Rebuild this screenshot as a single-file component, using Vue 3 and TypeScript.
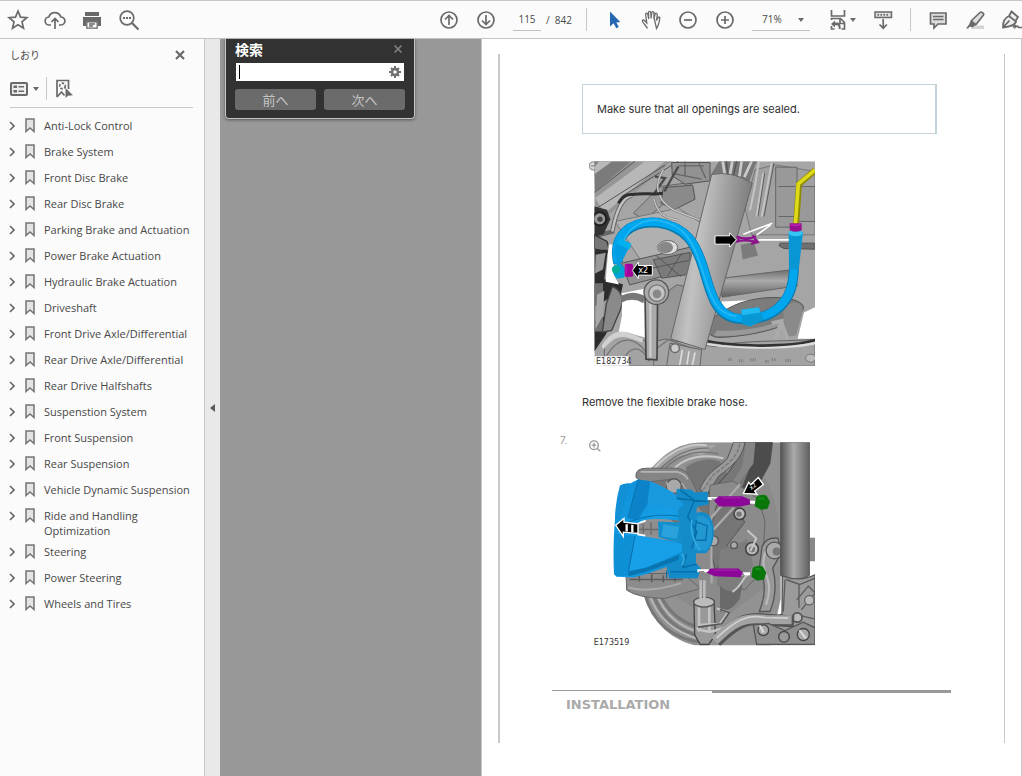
<script setup lang="ts">
import { ref } from 'vue'

interface Bookmark {
  title: string
}

const bookmarks: Bookmark[] = [
  'Anti-Lock Control',
  'Brake System',
  'Front Disc Brake',
  'Rear Disc Brake',
  'Parking Brake and Actuation',
  'Power Brake Actuation',
  'Hydraulic Brake Actuation',
  'Driveshaft',
  'Front Drive Axle/Differential',
  'Rear Drive Axle/Differential',
  'Rear Drive Halfshafts',
  'Suspenstion System',
  'Front Suspension',
  'Rear Suspension',
  'Vehicle Dynamic Suspension',
  'Ride and Handling Optimization',
  'Steering',
  'Power Steering',
  'Wheels and Tires',
].map((title) => ({ title }))

const page = ref('115')
const zoom = ref('71%')
const query = ref('')
</script>

<template>
  <div class="app">
    <header class="toolbar">
      <div class="group">
        <button class="tool" aria-label="Star">
          <svg viewBox="0 0 24 24"><path d="M12 3.200l2.500 6 6.400.5-4.900 4.200 1.500 6.300-5.500-3.400-5.500 3.400L8 13.900 3.100 9.700l6.400-.5z" class="line" /></svg>
        </button>
        <button class="tool" aria-label="Upload">
          <svg viewBox="0 0 24 24"><path d="M8 17H6.500a4 4 0 0 1-.7-8A6.300 6.300 0 0 1 17.800 9a4 4 0 0 1 .2 8H16M12 21v-10M8.500 14l3.500-3.500 3.500 3.500" class="line" /></svg>
        </button>
        <button class="tool" aria-label="Print">
          <svg viewBox="0 0 24 24"><path d="M5 4h14v4H5zM3 9h18v9h-3v-4H6v4H3z" class="solid" /><path d="M6.800 13.800h10.400v6.400H6.800z" fill="#fbfbfb" stroke="#6a6a6a" stroke-width="1.300" /><path d="M9 16h6M9 18h4" class="line thin" /></svg>
        </button>
        <button class="tool" aria-label="Search">
          <svg viewBox="0 0 24 24"><circle cx="10" cy="10" r="6.800" class="line" /><path d="M15 15l6.500 6.500" class="line heavy" /><path d="M6 9h2v2H6zM9 9h2v2H9zM12 9h2v2h-2z" class="solid" /></svg>
        </button>
      </div>

      <div class="group main-tools">
        <button class="tool" aria-label="Previous page">
          <svg viewBox="0 0 24 24"><circle cx="12" cy="12" r="8" class="line" /><path d="M12 17V8M8 11.500l4-4 4 4" class="line" /></svg>
        </button>
        <button class="tool" aria-label="Next page">
          <svg viewBox="0 0 24 24"><circle cx="12" cy="12" r="8" class="line" /><path d="M12 7v9M8 12.500l4 4 4-4" class="line" /></svg>
        </button>
        <label class="pager"><input v-model="page" aria-label="Page" /><span>/&nbsp; 842</span></label>
        <i class="divider"></i>
        <button class="tool" aria-label="Select">
          <svg viewBox="0 0 24 24"><path d="M8 3.500v15l3.600-3.200 2.600 5 2.600-1.300-2.500-4.600 4-.4z" fill="#2468b0" /></svg>
        </button>
        <button class="tool" aria-label="Pan">
          <svg viewBox="0 0 24 24"><path d="M8.500 20.500c-1-2-3.500-4.500-5-7-.6-1.200 1-2.100 2-1l2.300 2.300L6.600 6.500c-.2-1.500 1.900-1.900 2.200-.3l1 5M9.700 10L9.500 4.500c0-1.600 2.100-1.600 2.300 0l.4 6M12.200 9.500l.6-5c.2-1.400 2.100-1.200 2.200.2l-.1 6M15.100 10l1-4c.5-1.300 2.200-.8 2.200.5l-.8 6 1.600-3c.7-1 2-.3 1.700 1-.6 4-1.500 7.500-3.300 10z" class="line thin" /></svg>
        </button>
        <button class="tool" aria-label="Zoom out">
          <svg viewBox="0 0 24 24"><circle cx="12" cy="12" r="8" class="line" /><path d="M8 12h8" class="line" /></svg>
        </button>
        <button class="tool" aria-label="Zoom in">
          <svg viewBox="0 0 24 24"><circle cx="12" cy="12" r="8" class="line" /><path d="M8 12h8M12 8v8" class="line" /></svg>
        </button>
        <div class="zoom-box">
          <select v-model="zoom" aria-label="Zoom"><option>71%</option><option>100%</option></select>
          <svg class="caret" viewBox="0 0 6 4"><path d="M0 0h6L3 4z" class="solid" /></svg>
        </div>
        <button class="tool fit" aria-label="Page display">
          <svg viewBox="0 0 24 24"><path d="M5.500 2v6h13V2M5.500 12v-1.500h9l4 4V21h-3M5.500 18v3h3M14 11v4.500h4" class="line" /><path d="M9 12.500l-4 3.500 4 3.500v-2.200h2c1.300.2 1.700 1.200 1.700 3.700h2c0-4.500-1-6.500-3.700-6.500H9z" class="solid" /></svg>
          <svg class="caret" viewBox="0 0 6 4"><path d="M0 0h6L3 4z" class="solid" /></svg>
        </button>
        <button class="tool" aria-label="Read mode">
          <svg viewBox="0 0 24 24"><path d="M4 4h16.500v5.500H4z" fill="#ddd" stroke="#6a6a6a" stroke-width="1.500" /><path d="M6.500 6.800h12" stroke-dasharray="1.500 1.500" class="line" /><path d="M12.200 11v9M8.500 16.500l3.700 3.700 3.700-3.700" class="line" /></svg>
        </button>
        <i class="divider"></i>
        <button class="tool" aria-label="Comment">
          <svg viewBox="0 0 24 24"><path d="M4.500 5h15.500v11h-8l-4 4v-4H4.500z" fill="#ddd" stroke="#6a6a6a" stroke-width="1.700" /><path d="M7 8.500h10.500M7 11.500h10.500" class="line thin" /></svg>
        </button>
        <button class="tool" aria-label="Highlight">
          <svg viewBox="0 0 24 24"><path d="M10 17.500h11V21H8z" fill="#d4d4d4" /><path d="M8.500 12.500L17 4.500c1-1 4.500.5 3.500 2.500L13 16.500l-3.500 1z" fill="#ddd" stroke="#6a6a6a" stroke-width="1.600" /><path d="M8 12l5.500 4-4 3.500-2.500-1L5 20.500H3l3-4z" class="solid" /></svg>
        </button>
        <button class="tool sign" aria-label="Sign">
          <svg viewBox="0 0 24 24"><path d="M2 19.500c0-6 1-9 6-11.500l7 5.500c-1 4-6 5-13 6zM8 8l2.500-4.500L17 9l-2.500 4M2 19.500l6.500-7" fill="#eee" stroke="#6a6a6a" stroke-width="1.800" /><path d="M12 19.500c1.500-2 3-3 2.500-.5 1.500-1.500 2.500-1 3 .5h5" class="line" /></svg>
        </button>
      </div>
    </header>

    <div class="body">
      <aside class="sidebar">
        <div class="side-head">
          <h2>しおり</h2>
          <button class="close" aria-label="閉じる"><svg viewBox="0 0 10 10"><path d="M1 1l8 8M9 1L1 9" class="line heavy" /></svg></button>
        </div>
        <div class="side-tools">
          <button class="options" aria-label="Options">
            <svg class="list-icon" viewBox="0 0 18 14"><rect x="1" y="1" width="16" height="12" rx="1" fill="#eee" stroke="#6a6a6a" stroke-width="2" /><path d="M3.500 3.500h3.500v2.500H3.500zM3.500 8h3.500v2.500H3.500zM8.500 4h5.500v1.500H8.500zM8.500 8.500h5.500V10H8.500z" class="solid" /></svg>
            <svg class="caret" viewBox="0 0 6 4"><path d="M0 0h6L3 4z" class="solid" /></svg>
          </button>
          <i class="divider"></i>
          <button class="find-mark" aria-label="Find bookmark">
            <svg viewBox="0 0 18 20"><path d="M2 18V1.500h11.500V10M2 18l4.500-5 3 3.500" class="line" /><circle cx="7.500" cy="7" r="2.800" stroke-dasharray="2.500 1.500" class="line" /><path d="M10.500 9v10l2.500-2.200 5-.5z" class="solid" /></svg>
          </button>
        </div>
        <ul class="bookmarks">
          <li v-for="item in bookmarks" :key="item.title">
            <button class="expand" :aria-label="'Expand ' + item.title"><svg viewBox="0 0 6 10"><path d="M1 1l4 4-4 4" class="line" /></svg></button>
            <svg class="mark" viewBox="0 0 10 15"><path d="M1 1h8v12.500L5 10l-4 3.500z" fill="#e4e4e4" stroke="#747474" stroke-width="1.500" /></svg>
            <a href="#">{{ item.title }}</a>
          </li>
        </ul>
      </aside>
      <button class="splitter" aria-label="Collapse panel"><svg viewBox="0 0 5 8"><path d="M5 0v8L0 4z" fill="#5c5c5c" /></svg></button>

      <main class="viewer">
        <section class="search">
          <div class="search-head">
            <h2>検索</h2>
            <button aria-label="閉じる"><svg viewBox="0 0 10 10"><path d="M1.500 1.500l7 7M8.500 1.500l-7 7" stroke="#858585" stroke-width="1.500" /></svg></button>
          </div>
          <div class="field">
            <i class="cursor"></i>
            <input v-model="query" aria-label="検索" />
            <button aria-label="設定"><svg viewBox="0 0 12 12"><circle cx="6" cy="6" r="3" fill="none" stroke="#707070" stroke-width="2.500" /><path d="M6 0v3M6 9v3M0 6h3M9 6h3M2 2l2 2M8 8l2 2M10 2L8 4M4 8l-2 2" stroke="#707070" stroke-width="2" /></svg></button>
          </div>
          <div class="search-buttons"><button>前へ</button><button>次へ</button></div>
        </section>

        <article class="page">
          <div class="frame">
            <p class="note">Make sure that all openings are sealed.</p>

            <svg class="figure first" viewBox="42 34 678 614" role="img" aria-label="Flexible brake hose">
              <defs>
                <linearGradient id="strut" x1="0" y1="0" x2="1" y2=".25"><stop offset="0" stop-color="#858585" /><stop offset=".4" stop-color="#c2c2c2" /><stop offset="1" stop-color="#777" /></linearGradient>
                <linearGradient id="shaft" x1="0" y1="0" x2="0" y2="1"><stop offset="0" stop-color="#6d6d6d" /><stop offset=".4" stop-color="#aaa" /><stop offset="1" stop-color="#606060" /></linearGradient>
                <clipPath id="hose-clip"><path d="M58 34h662v614H58z" /></clipPath>
              </defs>
              <circle cx="55" cy="48" r="12" fill="#ddd" stroke="#999" stroke-width="4" /><path d="M48 48h14" stroke="#888" stroke-width="4" />
              <g clip-path="url(#hose-clip)">
                <path d="M58 34h662v614H58z" fill="#a5a5a5" />
                <path d="M58 60L170 34H290L60 230z" fill="#959595" />
                <path d="M60 145L210 34h60L90 190z" fill="#b7b7b7" />
                <path d="M58 128L180 34M58 180L270 46M140 140L310 34" stroke="#555" stroke-width="3" fill="none" />
                <path d="M58 34h110L60 125z" fill="#7b7b7b" /><path d="M72 34h40L60 72V50z" fill="#b9b9b9" />
                <path d="M175 190l80-80 90-12 14 50-70 30-20-18-60 50z" fill="#999" stroke="#666" stroke-width="3" />
                <path d="M265 113l88-7 7 42-62 32-40-20z" fill="#8a8a8a" stroke="#555" stroke-width="3" />
                <path d="M120 215l190-40 100 65-5 85-200 18z" fill="#b0b0b0" stroke="#777" stroke-width="3" />
                <path d="M290 38h115v55l-75 10-38-25z" fill="#929292" stroke="#555" stroke-width="3" />
                <path d="M310 48h76M330 34v42M300 72l80 16M372 40l20 45" stroke="#666" stroke-width="4" />
                <path d="M540 60l60-15 120 20v190H530l-20-80z" fill="#a0a0a0" stroke="#777" stroke-width="3" />
                <path d="M602 52h64v180h-64zM670 110h50v105h-50zM610 110h50M610 200h50" fill="#999" stroke="#666" stroke-width="3" />
                <path d="M540 34l-22 50-10 85M552 34l-12 75-15 73M565 70l-20 130M590 40l-30 160" stroke="#c4c4c4" stroke-width="6" fill="none" />
                <path d="M544 34l-22 50-10 85M569 70l-20 130M597 40l-30 160" stroke="#5c5c5c" stroke-width="3" fill="none" />
                <path d="M240 80l30 5-35 50M310 50l-42 75" stroke="#4a4a4a" stroke-width="7" fill="none" />
                <path d="M265 60c-20 30-35 80 30 120l90 35M236 147c18 60 42 55 75 65" stroke="#777" stroke-width="7" fill="none" />
                <path d="M265 60c-20 30-35 80 30 120l90 35M236 147c18 60 42 55 75 65" stroke="#c9c9c9" stroke-width="4" fill="none" />
                <path d="M58 260l54-15c12-65 30-104 60-108" fill="none" stroke="#666" stroke-width="13" /><path d="M112 245c12-65 30-104 60-108" fill="none" stroke="#c4c4c4" stroke-width="7" /><path d="M130 160q15-28 42-26c40-6 60 2 91-4" fill="none" stroke="#303030" stroke-width="9" />
                <path d="M58 170l38 10 10 28-20 45-28 8z" fill="#333" /><circle cx="74" cy="207" r="20" fill="#999" stroke="#222" stroke-width="7" /><circle cx="75" cy="208" r="8" fill="#444" />
                <path d="M58 255l38 20 10 34-48-12z" fill="#777" stroke="#333" stroke-width="4" />
                <path d="M58 300h40l-10 88 56 15-20 92-32 60-34 50z" fill="#2c2c2c" /><path d="M101 284h16v92l15 28-40-8z" fill="#fff" /><path d="M58 400h26v145H58z" fill="#707070" /><path d="M62 315l30-6-8 50-24 12zM60 470l45-26-5 50-42 20z" fill="#9a9a9a" />
                <path d="M112 410c28 10 36 40 24 70l-26 62-28 5 12-85z" fill="#8a8a8a" stroke="#444" stroke-width="4" />
                <path d="M66 435l22-12-4 75-23 40z" fill="#a8a8a8" />
                <path d="M140 340l248-58 20 60-244 63z" fill="#929292" stroke="#555" stroke-width="3" /><path d="M235 330l110-22v65l-85 12zM160 370l180-38M245 318l72 62M320 310l-42 68" fill="#7b7b7b" stroke="#555" stroke-width="3" />
                <path d="M140 430l75-15 20 155-58-16-48 3 12-60z" fill="#fff" /><path d="M140 437q38-18 70 3l-5 20q-34-20-68 0z" fill="#777" />
                <ellipse cx="278" cy="293" rx="30" ry="21" fill="#ddd" stroke="#666" stroke-width="3" /><ellipse cx="272" cy="293" rx="22" ry="17" fill="#888" />
                <path d="M245 450l60-45 62 12-25 130-94 40z" fill="#969696" stroke="#666" stroke-width="3" />
                <path d="M435 386l212-26 20 48-226 34z" fill="url(#shaft)" stroke="#666" stroke-width="3" />
                <path d="M615 280h105v18l-93-2-15-8z" fill="#707070" stroke="#555" stroke-width="3" />
                <path d="M440 455l210-10 15 40-210 60-30-25z" fill="#fff" /><path d="M442 487c80-60 238-53 244-14-8 48-130 86-258 90-42-8-49-45 14-76z" fill="#7c7c7c" stroke="#555" stroke-width="3" /><path d="M425 542c90 5 185-17 228-48l4 12c-52 34-154 57-240 52z" fill="#999" />
                <path d="M625 470c36-20 60-13 58 17l-20 70-34 5z" fill="#8a8a8a" /><path d="M687 488l33-16v95h-52z" fill="#fff" />
                <path d="M590 520l28-6-16 58M618 515l20 54" fill="none" stroke="#aaa" stroke-width="12" />
                <path d="M88 590c45-65 74-40 120-18 36 15 55-15 80 0l130 18c80-20 190-14 302-21v79H88z" fill="#a3a3a3" stroke="#666" stroke-width="3" />
                <path d="M390 568c60 15 245 25 330-1v8c-95 27-250 16-343 0z" fill="#333" /><path d="M390 578c70 16 240 20 330-2v8c-95 20-250 14-335 0z" fill="#ddd" /><path d="M80 588c40-62 72-45 124-21l-2 12c-55-22-75-31-117 20z" fill="#d0d0d0" />
                <path d="M95 617c50-80 105-42 127 8M140 640c24-58 58-55 83-5M240 600l40-30 80 28v50H235z" fill="none" stroke="#777" stroke-width="4" />
                <path d="M410 70l22-36h112l-20 60-111-10z" fill="#777" /><path d="M443 34l7 44M472 34l-8 45M500 34l-7 46M530 34l-22 48" stroke="#ccc" stroke-width="8" /><path d="M454 34l5 44M485 34l-10 45" stroke="#555" stroke-width="4" />
                <path d="M410 74q60-12 122 26L390 599l-103-32z" fill="url(#strut)" stroke="#666" stroke-width="3" />
                <path d="M285 580l95 20-5 48H275z" fill="#a4a4a4" stroke="#666" stroke-width="3" /><circle cx="300" cy="595" r="13" fill="#ccc" stroke="#666" stroke-width="4" /><path d="M322 600l-8 46M342 604l-6 40M360 608l-8 38" stroke="#ddd" stroke-width="5" />
                <path d="M210 430l38-4-2 204-33-2z" fill="#a9a9a9" stroke="#444" stroke-width="5" /><path d="M226 445v178" stroke="#ccc" stroke-width="7" />
                <circle cx="244" cy="427" r="37" fill="#aaa" stroke="#555" stroke-width="4" /><circle cx="246" cy="430" r="25" fill="#c2c2c2" stroke="#777" stroke-width="4" /><circle cx="246" cy="432" r="13" fill="#888" />
                <path d="M460 629h14M491 633h15M526 630h17M570 634h12M590 629h13M631 632h17" stroke="#808080" stroke-width="9" stroke-dasharray="4 3" /><ellipse cx="707" cy="625" rx="15" ry="12" fill="#bbb" stroke="#777" stroke-width="3" />
                <path d="M497 285l40-8 12 40-46 12z" fill="#7b7b7b" /><path d="M505 253l87-33M545 256l42-31M550 270h100" stroke="#fff" stroke-width="5" fill="none" />
                <path d="M485 260q28 12 58 0M483 276q30-10 67 2M492 264l-4 12M532 257l16 20-20 5" fill="none" stroke="#8c158c" stroke-width="7" />
                <path d="M720 61l-48 42-9 125" fill="none" stroke="#8d8b00" stroke-width="18" /><path d="M720 60l-50 42-9 126" fill="none" stroke="#dfda18" stroke-width="11" />
                <path d="M130 340C110 260 165 210 251 219c82 13 111 60 135 139 23 79 38 143 106 149 95 9 153-44 162-119 7-48 1-88 7-140" fill="none" stroke="#087bb0" stroke-width="30" />
                <path d="M129 339C109 259 165 208 251 217c82 13 111 60 135 139 23 79 38 143 106 149 95 9 153-44 162-119 7-48 1-88 7-140" fill="none" stroke="#00a7ef" stroke-width="24" />
                <path d="M144 278C165 222 215 207 252 212c79 15 101 65 121 123 34 98 40 155 111 165" fill="none" stroke="#25b9f5" stroke-width="5" />
                <path d="M118 305q3-26 14-39l36 16-27 53-15 10z" fill="#009de3" /><path d="M135 265l34 17-5 17-40-18z" fill="#00b0ef" />
                <path d="M641 246h43l-4 38-9 75h-29z" fill="#0897d4" /><ellipse cx="662" cy="250" rx="21" ry="9" fill="#36c4f5" />
                <path d="M498 480l54-8 14 38-40 20-24-7z" fill="#0898d3" /><path d="M498 480l54-8 4 16-54 8z" fill="#20b9f0" />
                <path d="M117 349l18-11 15 18-2 27-23 4-10-15z" fill="#00a0d9" /><circle cx="123" cy="359" r="12" fill="#00ad9a" />
                <rect x="149" y="342" width="25" height="39" rx="5" fill="#a3009b" /><path d="M153 346v29" stroke="#c21bb8" stroke-width="4" />
                <path d="M644 220h36v21q-18 10-36 0z" fill="#97118f" /><path d="M647 222q15 10 30 0" stroke="#c323ba" stroke-width="4" fill="none" />
                <path d="M420 258h44v-9l20 21-20 22v-9h-44zM232 347h-42v-10l-18 25 18 24v-10h42z" fill="#000" stroke="#fff" stroke-width="3" />
                <text x="190" y="371" class="part-label white">x2</text>
              </g>
              <path d="M58 619h103v29H58z" fill="#fff" /><text x="63" y="642" class="part-label">E182734</text>
            </svg>

            <p class="step">Remove the flexible brake hose.</p>

            <div class="step-row">
              <span class="number">7.</span>
              <svg class="figure second" viewBox="117 150 678 620" role="img" aria-label="Brake caliper removal">
                <defs>
                  <linearGradient id="tube"><stop offset="0" stop-color="#555" /><stop offset=".45" stop-color="#aaa" /><stop offset="1" stop-color="#636363" /></linearGradient>
                  <linearGradient id="caliper" x1="0" y1="0" x2="1" y2="1"><stop offset="0" stop-color="#0d8fd8" /><stop offset=".5" stop-color="#169fe6" /><stop offset="1" stop-color="#0a84c6" /></linearGradient>
                  <clipPath id="brake-clip"><path d="M117 156h678v610H117z" /></clipPath>
                </defs>
                <circle cx="132" cy="165" r="13" fill="none" stroke="#999" stroke-width="4" /><path d="M125 165h14M132 158v14M141 174l10 9" stroke="#999" stroke-width="4" />
                <g clip-path="url(#brake-clip)">
                  <path d="M460 156h232v470l-30 140H435C355 745 305 695 282 604L290 255C330 200 375 157 460 156z" fill="#929292" />
                  <path d="M305 232C350 183 410 160 500 164l-45 32c-64-13-114 18-145 57z" fill="#a4a4a4" />
                  <path d="M470 165C385 155 327 215 305 246M520 204c-85-18-134 13-160 44" stroke="#c8c8c8" stroke-width="6" fill="none" />
                  <path d="M478 174C394 169 339 223 319 254M505 191c-85-20-145 22-168 55" stroke="#747474" stroke-width="4" fill="none" />
                  <path d="M283 609c26 92 87 140 181 149M309 610c25 75 75 112 150 131M330 612c28 64 76 94 142 106" stroke="#777" stroke-width="9" fill="none" /><path d="M297 609c26 82 83 120 155 139M320 610c25 70 75 104 139 119" stroke="#bbb" stroke-width="5" fill="none" />
                  <path d="M408 225q55-34 100-15l85-14 62 85c40 100 48 212-5 307L500 699 350 601z" fill="#8b8b8b" /><path d="M410 230q55-34 100-15l45 78-70 105-80-90z" fill="#747474" />
                  <path d="M580 156h85l-15 75-92 86-62 75-25-77c50-53 85-77 109-159z" fill="#777" stroke="#444" stroke-width="3" />
                  <path d="M551 156h34c-8 42-28 65-78 101l-39 59-18-20c25-57 53-59 82-91z" fill="#999" stroke="#555" stroke-width="3" /><path d="M569 160c-3 42-48 70-81 96l-30 46" stroke="#777" stroke-width="4" stroke-dasharray="12 5" fill="none" />
                  <path d="M610 156h59l-8 65-45 82-40-12 30-76z" fill="#4c4c4c" /><path d="M588 156h28l-6 65-50 66-34 20 50-76z" fill="#858585" />
                  <path d="M258 262q-5-29 36-28h84q32 4 43 29l24 50-110 13-60-52z" fill="#858585" stroke="#666" stroke-width="3" /><path d="M272 245h110q25 7 31 23" stroke="#b4b4b4" stroke-width="5" fill="none" />
                  <path d="M300 275l80-10 60 75-40 70-115-68z" fill="#777" stroke="#666" stroke-width="3" /><circle cx="372" cy="288" r="22" fill="#a9a9a9" stroke="#555" stroke-width="4" /><path d="M315 284l40 40M395 278l40 61M350 275l12 50" stroke="#aaa" stroke-width="5" />
                  <path d="M228 550h170l54 45-108 30q-80-2-114-25z" fill="#8c8c8c" stroke="#666" stroke-width="3" /><path d="M238 568h160M268 550v24M305 552v24M340 555v21M375 550v24" stroke="#5c5c5c" stroke-width="5" /><path d="M235 592q60 18 158-13" stroke="#aaa" stroke-width="6" fill="none" />
                  <path d="M480 285l70-12 75 55 20 64-8 150-54 58-70-45-40-130z" fill="#8b8b8b" stroke="#666" stroke-width="3" />
                  <path d="M500 345l52-18 32 70-50 64-36 84-25-95z" fill="#767676" stroke="#555" stroke-width="3" /><path d="M480 387l90-105M491 418l61-66M542 602l35-55M483 380l2 200" stroke="#aaa" stroke-width="7" fill="none" />
                  <path d="M510 480c30-20 65-15 80-35l20 80-60 90-50-30z" fill="#7d7d7d" /><path d="M510 585q40 45 70-20l-10 60q-25 40-60 40z" fill="#6a6a6a" />
                  <circle cx="569" cy="371" r="17" fill="#bbb" stroke="#444" stroke-width="5" /><circle cx="567" cy="372" r="8" fill="#777" /><circle cx="552" cy="465" r="10" fill="#aaa" stroke="#555" stroke-width="4" /><circle cx="606" cy="476" r="19" fill="#bbb" stroke="#444" stroke-width="5" /><circle cx="606" cy="477" r="9" fill="#777" /><circle cx="490" cy="452" r="15" fill="#aaa" stroke="#555" stroke-width="4" />
                  <path d="M592 420l27 25-18 38M600 550c-22 5-20 36-53 55" stroke="#c6c6c6" stroke-width="6" fill="none" />
                  <path d="M636 470q12-30 48-26l10 45-26 45q18 65-8 130h-32q30-75 0-130z" fill="#999" stroke="#555" stroke-width="4" /><path d="M652 475q-20 36-6 73 21 45 2 96" stroke="#bbb" stroke-width="6" fill="none" /><circle cx="673" cy="481" r="25" fill="#a9a9a9" stroke="#555" stroke-width="4" /><circle cx="680" cy="484" r="12" fill="#777" />
                  <path d="M779 443h16v70h-16z" fill="#888" /><path d="M692 156h86v400q-40 24-86 0z" fill="url(#tube)" stroke="#555" stroke-width="3" />
                  <path d="M697 557q50 20 98-3v208H655l-15-70 56-20z" fill="#9b9b9b" stroke="#555" stroke-width="4" /><path d="M708 568l41 15 46-19M747 583v70M705 568l-5 97M740 629l35-41 20 20M754 659l41-50M690 694l52-20 51 12" stroke="#5c5c5c" stroke-width="4" fill="none" /><circle cx="742" cy="682" r="14" fill="#bbb" stroke="#555" stroke-width="5" /><circle cx="778" cy="630" r="14" fill="#bbb" stroke="#666" stroke-width="4" />
                  <path d="M432 632h60l4 102-20 29h-25l-17-29z" fill="#999" stroke="#444" stroke-width="4" /><path d="M447 643v82M478 646v82" stroke="#c3c3c3" stroke-width="8" /><ellipse cx="462" cy="636" rx="31" ry="15" fill="#bbb" stroke="#555" stroke-width="4" /><path d="M452 570v55M463 570v55" stroke="#bbb" stroke-width="8" />
                  <path d="M500 655l35 10-25 36-66 3M440 714c55 25 62-4 96-3" fill="none" stroke="#c4c4c4" stroke-width="7" /><path d="M510 658l28 9-23 34-71 10" fill="none" stroke="#555" stroke-width="5" />
                  <path d="M498 755c55-55 89-76 154-66l80 5" fill="none" stroke="#555" stroke-width="36" /><path d="M494 752c55-55 87-73 153-64l78 1" fill="none" stroke="#a3a3a3" stroke-width="27" /><path d="M500 743c55-50 89-72 144-61l70 2" fill="none" stroke="#d0d0d0" stroke-width="5" />
                  <path d="M610 704l45-4 50 21 55-25 35 17v50H620z" fill="#8f8f8f" stroke="#555" stroke-width="4" /><circle cx="640" cy="720" r="16" fill="#aaa" stroke="#444" stroke-width="4" /><circle cx="702" cy="740" r="16" fill="#999" stroke="#444" stroke-width="4" /><circle cx="760" cy="733" r="18" fill="#aaa" stroke="#444" stroke-width="4" /><path d="M629 706l12 21M748 720l20 25" stroke="#ddd" stroke-width="6" />
                  <path d="M210 287q12-9 30-7l24-12 36 5q65 25 120 72l20 50-98-8q-60-4-80 12v36l130 22 35 35-39 24-95 35-42 11-51-2-8-8q-7-145 18-265z" fill="url(#caliper)" />
                  <path d="M300 273q65 25 120 72l-18 22-110-24z" fill="#1899e0" /><path d="M264 268l36 5-8 70-30 48-26-6z" fill="#0c83c8" /><path d="M210 287q12-9 30-7l-30 104-15 10q0-60 15-107z" fill="#1190d5" />
                  <path d="M255 438l137 22 12 20-115 52-54 12z" fill="#17a0e8" /><path d="M193 430l62 8-20 118-35 2-8-8z" fill="#0e90d6" /><path d="M235 544l54-12 100-38-5 16-95 35-54 13z" fill="#0875b0" />
                  <path d="M264 270l-30 112M255 438l-20 106M236 396q80-34 175-14" fill="none" stroke="#0a70ab" stroke-width="3" />
                  <path d="M262 402q30-12 64-8v46l-64-10z" fill="#8e8e8e" /><path d="M280 402v28M303 397v36M268 418h56" stroke="#6a6a6a" stroke-width="4" /><path d="M324 394l86 4v66l-84-22z" fill="#148fcd" /><path d="M340 402l48 8-8 36-45-8z" fill="#2ba2dc" />
                  <path d="M380 296l43 2 12 9 38-2 3 38-35 7-2 18q37-12 49 30 12 58-20 91h-30v30l15 15-10 30-85 1-10-41 48-15v-40l-12-110 18-17-23-19z" fill="#138bc9" />
                  <path d="M440 378q34-6 44 28 9 48-16 76l-34-4z" fill="#2298d3" />
                  <path d="M391 300l42 30-20 50 28 45-16 50M380 325l90 9M440 396l32 11-5 44-34-2 6-60M410 492l-12 40 42-10M360 545h86M350 563v-22" fill="none" stroke="#076ca6" stroke-width="4" /><path d="M425 389q-7 47 25 92M395 490q14 18 0 35" fill="none" stroke="#32aae3" stroke-width="5" />
                  <path d="M473 325h30M595 336h20M442 542h35M565 551h35" stroke="#fff" stroke-width="9" /><path d="M485 327h15M447 545h15M570 552h12" stroke="#555" stroke-width="3" />
                  <path d="M506 318h71l22 10 2 15-30 6h-63l-16-17zM482 535h83l14 12-8 14-77-3-24-10z" fill="#8c0797" /><path d="M516 323h58M490 540h72" stroke="#a31dac" stroke-width="4" />
                  <path d="M619 320q16-10 31-3l10 18-7 21-20 3-19-11zM608 533q15-10 31-3l10 18-7 20-20 4-18-12z" fill="#087608" /><path d="M626 324l16 2M616 536l16 2" stroke="#12901a" stroke-width="6" />
                  <path d="M580 310l16-34 6 8 23-22 15 21-26 20 7 9zM197 405l25-20v11l42 5v29l-44-4v13z" fill="#000" stroke="#fff" stroke-width="4" /><path d="M230 402v22M247 404v22" stroke="#fff" stroke-width="7" />
                  <text x="604" y="300" class="part-label white small" transform="rotate(-40 604 300)">x2</text>
                </g>
                <text x="131" y="765" class="part-label">E173519</text>
              </svg>
            </div>

            <div class="rule"><i></i><i></i></div>
            <h3>INSTALLATION</h3>
          </div>
        </article>
      </main>
    </div>
  </div>
</template>

<style>
body { margin: 0; }
</style>

<style scoped>
* { box-sizing: border-box; }
.app { min-height: 100vh; display: flex; flex-direction: column; font-family: "Open Sans", "Noto Sans CJK JP", sans-serif; font-size: 11px; color: #484848; overflow: hidden; }
button { border: 0; padding: 0; margin: 0; background: transparent; font: inherit; color: inherit; }
h2, h3, p, ul { margin: 0; padding: 0; }
svg { display: block; flex: none; }
.line { fill: none; stroke: #6a6a6a; stroke-width: 1.7; }
.thin { stroke-width: 1.3; }
.heavy { stroke-width: 2.2; }
.solid { fill: #6a6a6a; }
.toolbar { height: 39px; display: flex; justify-content: space-between; background: #fbfbfb; border-top: 1px solid #c8c8c8; border-bottom: 1px solid #c4c4c4; }
.group { display: flex; align-items: center; gap: 1px; }
.tool { width: 36px; height: 36px; display: flex; align-items: center; justify-content: center; flex: none; }
.tool svg { width: 24px; height: 24px; }
.divider { width: 1px; height: 23px; background: #c8c8c8; flex: none; }
.pager { display: flex; align-items: center; gap: 5px; margin: 0 13px 0 8px; height: 24px; font-size: 10px; }
.pager input { width: 28px; height: 23px; border: 0; border-bottom: 1px solid #c0c0c0; background: transparent; padding: 0; text-align: center; font: inherit; color: inherit; }
.pager span { width: 26px; white-space: nowrap; }
.main-tools > .divider + .tool { margin-left: 8px; }
.zoom-box { position: relative; margin-left: 8px; width: 58px; height: 23px; border-bottom: 1px solid #c0c0c0; }
.zoom-box select { width: 100%; height: 22px; border: 0; padding: 0 0 0 10px; appearance: none; background: transparent; font: inherit; font-size: 10px; color: inherit; }
.caret, .tool .caret { width: 6px; height: 4px; }
.zoom-box .caret { position: absolute; right: 6px; top: 10px; }
.tool.fit { margin-left: 14px; width: 32px; }
.fit + .tool { margin-left: 7px; }
.main-tools > .fit + .tool + .divider { margin-left: 8px; }
.tool.sign { width: 21px; justify-content: flex-start; overflow: hidden; margin-left: 7px; }
.body { flex: 1; display: flex; }
.sidebar { width: 205px; flex: none; background: #fbfbfb; border-right: 1px solid #c8c8c8; }
.side-head { display: flex; align-items: center; justify-content: space-between; height: 31px; padding: 0 19px 0 10px; }
.side-head h2 { font-size: 10px; font-weight: 400; }
.close svg { width: 10px; height: 10px; }
.side-tools { height: 38px; margin: 0 11px 5px 10px; border-bottom: 1px solid #c8c8c8; display: flex; align-items: center; }
.options { display: flex; align-items: center; gap: 5px; margin-right: 7px; }
.list-icon { width: 18px; height: 14px; }
.find-mark { margin-left: 8px; }
.find-mark svg { width: 18px; height: 20px; }
.bookmarks { list-style: none; }
.bookmarks li { display: flex; align-items: flex-start; min-height: 26px; padding: 5px 14px 1px 9px; line-height: 15px; }
.expand { height: 15px; width: 16px; display: flex; align-items: center; }
.expand svg { width: 6px; height: 10px; }
.mark { width: 10px; height: 15px; }
.bookmarks a { margin-left: 9px; color: inherit; text-decoration: none; flex: 1; }
.splitter { width: 15px; flex: none; background: #e9e9e9; display: flex; align-items: center; justify-content: center; }
.splitter svg { width: 5px; height: 8px; }
.viewer { flex: 1; min-width: 0; display: flex; background: #989898; justify-content: flex-end; position: relative; }
.search { position: absolute; left: 5px; top: 0; width: 190px; padding: 0 9px 8px; background: #323232; border: 1px solid #c4c4c4; border-top: 0; border-radius: 0 0 4px 4px; box-shadow: 0 1px 3px #555; font-family: "Noto Sans CJK JP", sans-serif; }
.search-head { display: flex; align-items: center; justify-content: space-between; height: 20px; padding-right: 2px; }
.search-head h2 { color: #fff; font-size: 14px; line-height: 20px; }
.search-head svg { width: 10px; height: 10px; }
.field { display: flex; align-items: center; background: #fff; height: 18px; margin: 4px 1px 8px; padding: 0 3px; }
.cursor { width: 1px; height: 14px; background: #000; }
.field input { flex: 1; min-width: 0; border: 0; outline: 0; background: transparent; }
.field svg { width: 12px; height: 12px; }
.search-buttons { display: grid; grid-template-columns: 1fr 1fr; gap: 8px; }
.search-buttons button { height: 21px; border-radius: 3px; background: #6b6b6b; color: #c4c4c4; font-size: 13px; line-height: 20px; }
.page { flex: 0 0 541px; background: #fff; border-left: 1px solid #c8c8c8; border-right: 1px solid #c8c8c8; padding: 15px 16px 33px; font-family: Inter, sans-serif; color: #303030; }
.frame { border-left: 2px solid #c8c8c8; border-right: 1px solid #c8c8c8; padding: 30px 0; min-height: 689px; }
.note { margin: 0 67px 27px 82px; border: 1px solid #c0d4d9; border-right-width: 2px; padding: 15px 14px; line-height: 18px; font-size: 11px; }
.figure { width: 226px; }
.first { margin-left: 89px; height: 205px; }
.second { height: 207px; }
.step { margin: 28px 0 30px 82px; line-height: 16px; font-size: 11px; }
.step-row { display: flex; padding-left: 60px; }
.number { width: 29px; height: 12px; line-height: 1px; font-size: 10px; color: #999; }
.part-label { font-family: "DejaVu Sans", sans-serif; font-size: 24px; fill: #333; }
.part-label.white { fill: #fff; }
.part-label.small { font-size: 18px; }
.rule { margin: 43px 53px 0 52px; display: flex; align-items: flex-start; }
.rule i { height: 1px; background: #999; flex: 2; }
.rule i + i { height: 3px; flex: 3; }
h3 { margin: 4px 0 0 66px; font-family: "DejaVu Sans", sans-serif; font-size: 13px; line-height: 16px; color: #aaa; }
</style>
